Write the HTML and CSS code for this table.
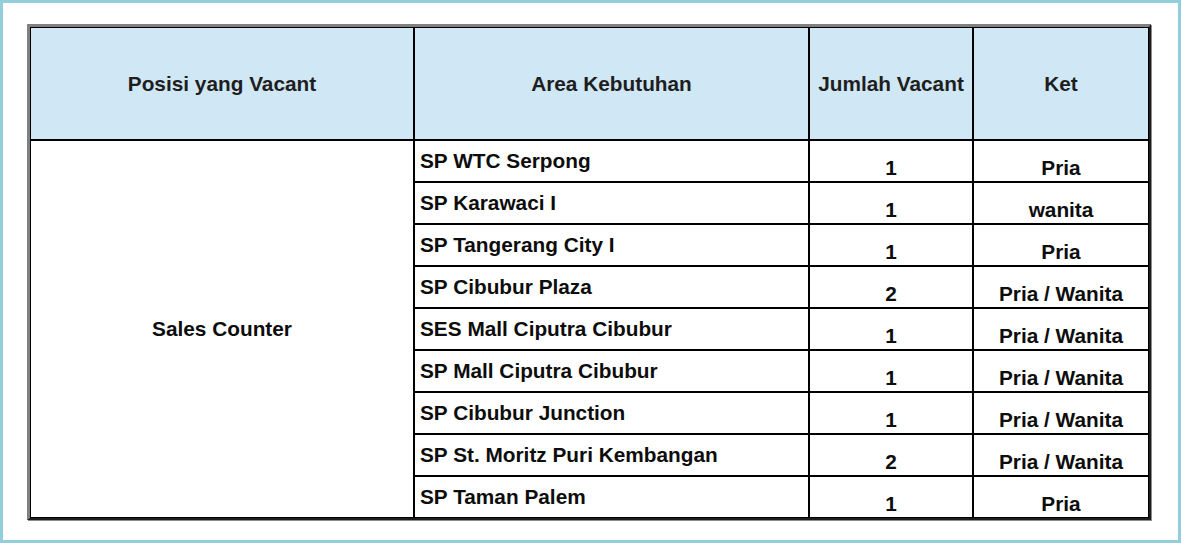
FILE: index.html
```html
<!DOCTYPE html>
<html>
<head>
<meta charset="utf-8">
<link rel="stylesheet" href="styles.css">
</head>
<body>
<div class="frame">
<table class="vac">
<colgroup>
<col class="c1"><col class="c2"><col class="c3"><col class="c4">
</colgroup>
<thead>
<tr class="head">
<th>Posisi yang Vacant</th>
<th>Area Kebutuhan</th>
<th>Jumlah Vacant</th>
<th>Ket</th>
</tr>
</thead>
<tbody>
<tr>
<td class="pos" rowspan="9">Sales Counter</td>
<td class="area">SP WTC Serpong</td><td class="num">1</td><td class="ket">Pria</td>
</tr>
<tr><td class="area">SP Karawaci I</td><td class="num">1</td><td class="ket">wanita</td></tr>
<tr><td class="area">SP Tangerang City I</td><td class="num">1</td><td class="ket">Pria</td></tr>
<tr><td class="area">SP Cibubur Plaza</td><td class="num">2</td><td class="ket">Pria / Wanita</td></tr>
<tr><td class="area">SES Mall Ciputra Cibubur</td><td class="num">1</td><td class="ket">Pria / Wanita</td></tr>
<tr><td class="area">SP Mall Ciputra Cibubur</td><td class="num">1</td><td class="ket">Pria / Wanita</td></tr>
<tr><td class="area">SP Cibubur Junction</td><td class="num">1</td><td class="ket">Pria / Wanita</td></tr>
<tr><td class="area">SP St. Moritz Puri Kembangan</td><td class="num">2</td><td class="ket">Pria / Wanita</td></tr>
<tr><td class="area">SP Taman Palem</td><td class="num">1</td><td class="ket">Pria</td></tr>
</tbody>
</table>
</div>
</body>
</html>
```

FILE: styles.css
```css
html, body {
  margin: 0;
  padding: 0;
  background: #ffffff;
}

.frame {
  width: 1181px;
  height: 543px;
  box-sizing: border-box;
  border: 3px solid #93cedc;
  padding: 21px 0 0 24px;
  background: #ffffff;
}

.vac {
  border-collapse: separate;
  border-spacing: 0;
  table-layout: fixed;
  width: 1124px;
  border-style: solid;
  border-width: 3px 2px 2px 3px;
  border-color: #808080 #1c1c1c #1c1c1c #808080;
  box-shadow: 1px 1px 0 #8c8c8c;
  font-family: "Liberation Sans", Arial, sans-serif;
  font-weight: bold;
  font-size: 20.8px;
  color: #0d0d0d;
}

.c1 { width: 384px; }
.c2 { width: 395px; }
.c3 { width: 164px; }
.c4 { width: 176px; }

.vac th,
.vac td {
  border: 1px solid #000000;
  padding: 0;
  box-sizing: border-box;
  overflow: hidden;
  white-space: nowrap;
}

.head {
  height: 113px;
}

.head th {
  background: #d0e7f5;
  color: #1e1e1e;
  text-align: center;
  vertical-align: middle;
  font-weight: bold;
}

tbody tr {
  height: 42px;
}

.pos {
  text-align: center;
  vertical-align: middle;
}

.area {
  text-align: left;
  vertical-align: top;
  padding: 8px 0 0 5px !important;
}

.num,
.ket {
  text-align: center;
  vertical-align: bottom;
  padding: 0 0 1px 0 !important;
}
```
